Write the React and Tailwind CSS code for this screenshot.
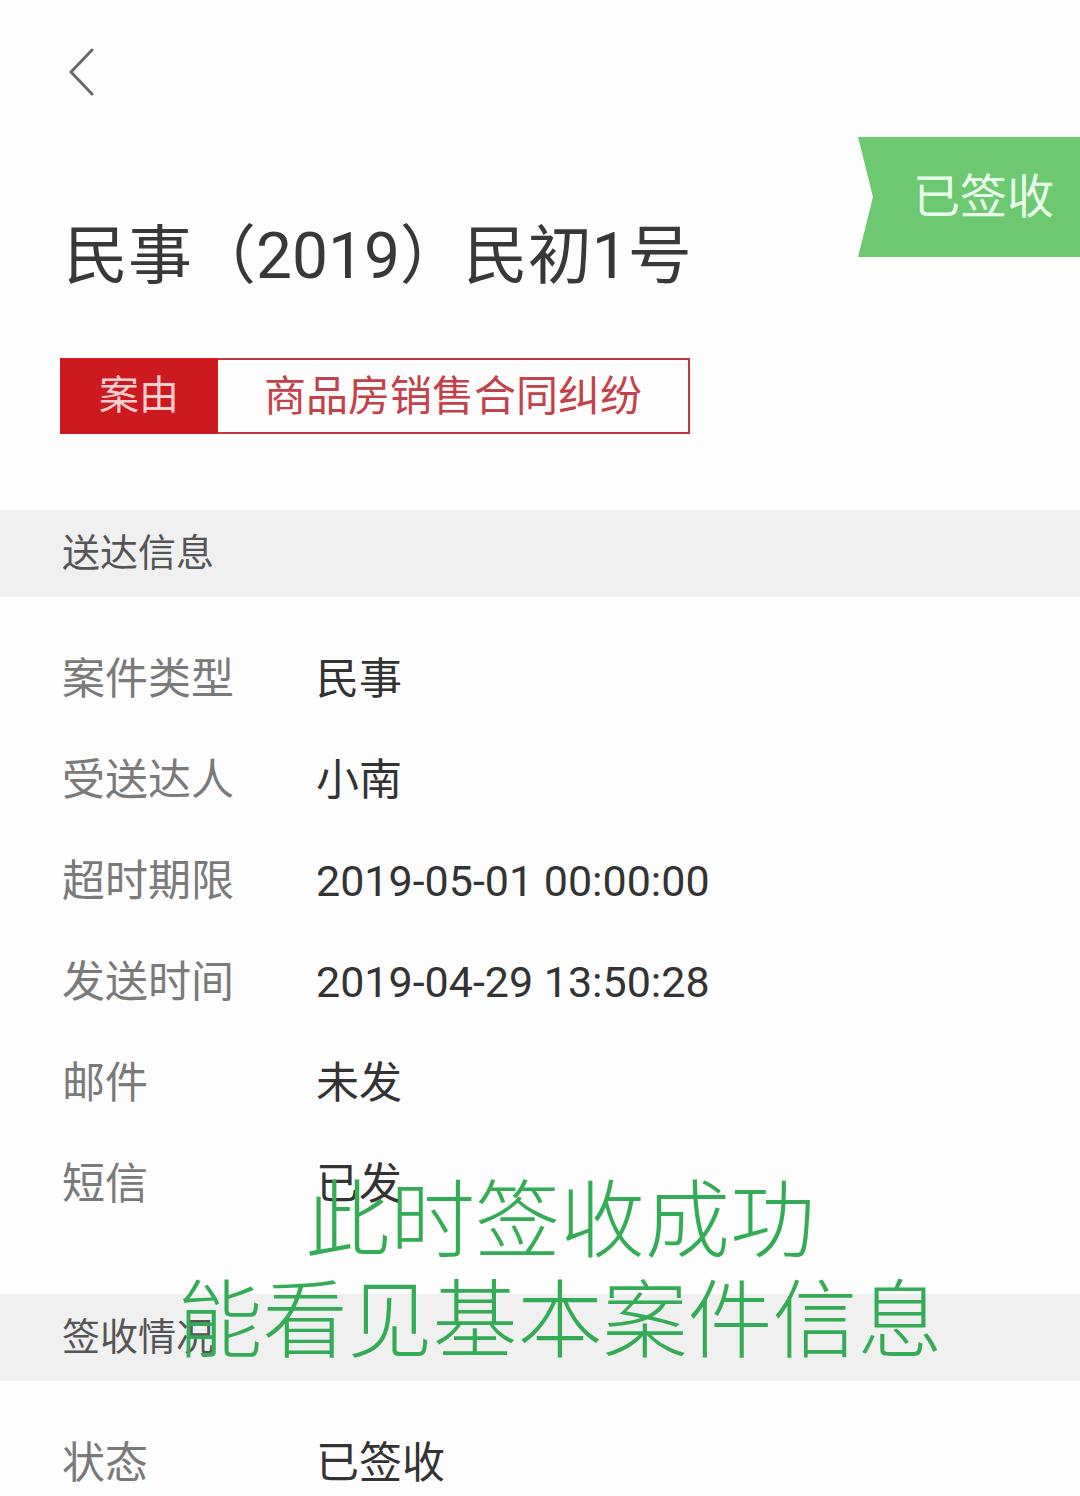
import React from "react";

const FONT = { fontFamily: 'Roboto, "Noto Sans CJK SC", sans-serif' };

const DELIVERY = [
  { label: "案件类型", value: "民事" },
  { label: "受送达人", value: "小南" },
  { label: "超时期限", value: "2019-05-01 00:00:00" },
  { label: "发送时间", value: "2019-04-29 13:50:28" },
  { label: "邮件", value: "未发" },
  { label: "短信", value: "已发" },
];

function Row({ label, value }) {
  return (
    <div className="flex h-[101px] items-center px-[62px] text-[43px]">
      <span className="w-[254px] text-[#7a7a7a]">{label}</span>
      <span className="text-[#333333]">{value}</span>
    </div>
  );
}

function SectionHeader({ children }) {
  return (
    <div className="flex h-[87px] items-center bg-[#f0f0f0] px-[62px] text-[38px] text-[#555555]">
      {children}
    </div>
  );
}

export default function App() {
  return (
    <div className="relative h-[1496px] w-[1080px] overflow-hidden bg-[#fdfdfd]" style={FONT}>
      {/* header */}
      <div className="relative h-[510px]">
        <div className="pl-[68px] pt-[48px]">
          <svg width="28" height="48" viewBox="0 0 28 48" fill="none">
            <path d="M24 2 L3 24 L24 46" stroke="#6a6a6a" strokeWidth="3" strokeLinecap="round" strokeLinejoin="round" />
          </svg>
        </div>

        <h1 className="mt-[123px] pl-[64px] text-[64px] leading-[76px] text-[#383838]">
          民事（2019）民初1号
        </h1>

        <div className="ml-[60px] mt-[63px] flex h-[76px] w-[630px]">
          <div className="flex w-[158px] items-center justify-center bg-[#cc1a1f] text-[40px] text-[#f9cfcf]">
            案由
          </div>
          <div className="flex flex-1 items-center justify-center border-2 border-l-0 border-[#c8343c] text-[42px] text-[#c4404a]">
            商品房销售合同纠纷
          </div>
        </div>

        {/* status ribbon */}
        <div
          className="absolute right-0 top-[137px] flex h-[120px] w-[222px] items-center justify-end bg-[#6dc872] pr-[26px] text-[47px] text-[#eaffea]"
          style={{ clipPath: "polygon(0 0, 100% 0, 100% 100%, 0 100%, 15px 50%)" }}
        >
          已签收
        </div>
      </div>

      <SectionHeader>送达信息</SectionHeader>
      <div className="pt-[32px]">
        {DELIVERY.map((r) => (
          <Row key={r.label} {...r} />
        ))}
      </div>

      <div className="mt-[59px]">
        <SectionHeader>签收情况</SectionHeader>
      </div>
      <div className="pt-[32px]">
        <Row label="状态" value="已签收" />
      </div>

      {/* caption overlay */}
      <div className="absolute left-0 top-[1172px] w-[1120px] text-center text-[85px] leading-[100px] font-light text-[#34ac55]">
        <div>此时签收成功</div>
        <div>能看见基本案件信息</div>
      </div>
    </div>
  );
}
